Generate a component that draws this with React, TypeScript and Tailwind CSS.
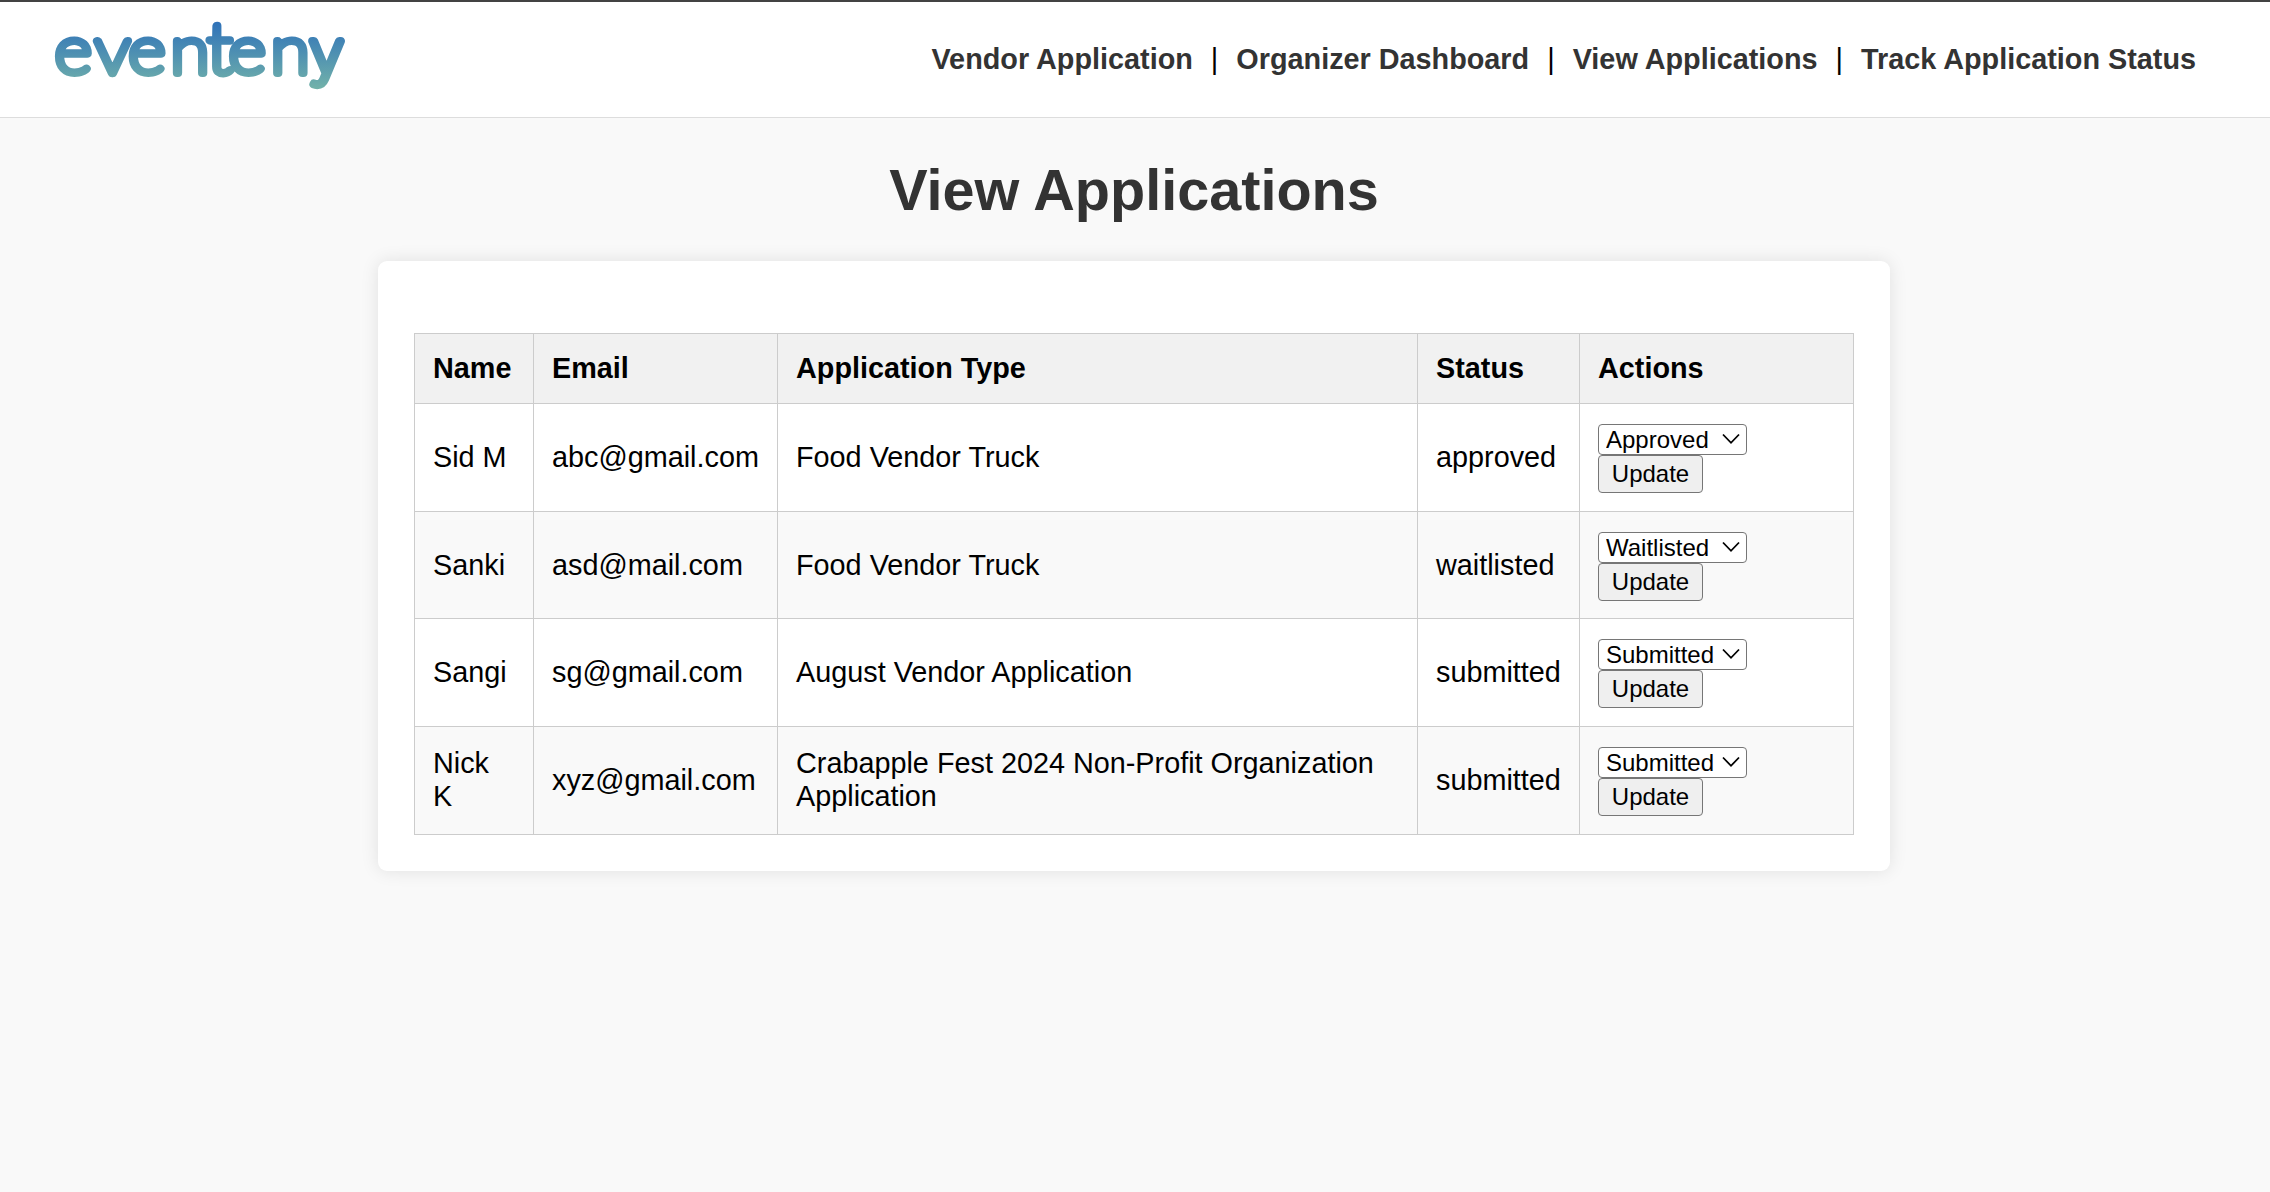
type Application = {
  name: string;
  email: string;
  type: string;
  status: string;
  action: string;
  height: string;
};

const applications: Application[] = [
  { name: 'Sid M', email: 'abc@gmail.com', type: 'Food Vendor Truck', status: 'approved', action: 'Approved', height: 'h-[108px]' },
  { name: 'Sanki', email: 'asd@mail.com', type: 'Food Vendor Truck', status: 'waitlisted', action: 'Waitlisted', height: 'h-[107px]' },
  { name: 'Sangi', email: 'sg@gmail.com', type: 'August Vendor Application', status: 'submitted', action: 'Submitted', height: 'h-[108px]' },
  { name: 'Nick K', email: 'xyz@gmail.com', type: 'Crabapple Fest 2024 Non-Profit Organization Application', status: 'submitted', action: 'Submitted', height: 'h-[108px]' },
];

const links = ['Vendor Application', 'Organizer Dashboard', 'View Applications', 'Track Application Status'];
const headings = ['Name', 'Email', 'Application Type', 'Status', 'Actions'];
const statuses = ['Submitted', 'Approved', 'Waitlisted', 'Rejected'];

function Logo() {
  return (
    <svg width="320" height="115" viewBox="45 2 320 115" aria-label="eventeny" className="block">
      <defs>
        <linearGradient id="brand" gradientUnits="userSpaceOnUse" x1="0" y1="22" x2="0" y2="91">
          <stop offset="0" stopColor="#2f72b9" />
          <stop offset="1" stopColor="#74b4a9" />
        </linearGradient>
      </defs>
      <text
        transform="scale(1.08 1)"
        x="50.6 88 119 157.8 192 211.8 250.8 286.3"
        y="73.1"
        fontSize="66"
        fill="url(#brand)"
        stroke="url(#brand)"
        strokeWidth="7.8"
        strokeLinejoin="round"
        className="font-['Lato',sans-serif] font-extralight"
      >
        even<tspan fontSize="70">t</tspan>en
        <tspan fontSize="59" className="font-['Inter',sans-serif] font-thin">y</tspan>
      </text>
    </svg>
  );
}

function StatusSelect({ value }: { value: string }) {
  return (
    <div className="relative h-[31px] w-[149px]">
      <select
        defaultValue={value}
        className="block h-full w-full appearance-none rounded-[4px] border border-[#767676] bg-white pl-[7px] text-[24px] leading-[29px] text-black"
      >
        {statuses.map((s) => (
          <option key={s}>{s}</option>
        ))}
      </select>
      <svg width="18" height="12" viewBox="0 0 18 12" className="pointer-events-none absolute top-[9px] right-[7px]">
        <path d="M1 1.5 L9 9.8 L17 1.5" fill="none" stroke="#000" strokeWidth="1.8" />
      </svg>
    </div>
  );
}

export default function App() {
  return (
    <div className="flex min-h-screen flex-col bg-[#f9f9f9] font-['Liberation_Sans',Arial,sans-serif] text-[28.8px] leading-[33px] text-black">
      <header className="flex h-[118px] items-start justify-between border-t-2 border-b border-t-[#434343] border-b-[#ddd] bg-white pr-[56px] pl-[45px]">
        <Logo />
        <nav className="flex items-center pt-[41px]">
          {links.map((label, i) => (
            <div key={label} className="flex items-center">
              {i > 0 && <span className="w-[7.5px] text-center">|</span>}
              <a href="#" className="mx-[18px] font-bold whitespace-nowrap text-[#333]">
                {label}
              </a>
            </div>
          ))}
        </nav>
      </header>

      <main className="flex flex-col items-center pr-[2px]">
        <h1 className="mt-[39px] text-[57.6px] leading-[66px] font-bold text-[#333]">View Applications</h1>
        <section className="mt-[38px] h-[610px] w-[1512px] rounded-[9px] bg-white px-[36px] pt-[72px] shadow-[0_0_18px_rgba(0,0,0,0.1)]">
          <table className="w-[1440px] table-fixed border-separate border-spacing-0 border-t border-l border-[#ccc]">
            <colgroup>
              <col className="w-[119px]" />
              <col className="w-[244px]" />
              <col className="w-[640px]" />
              <col className="w-[162px]" />
              <col className="w-[274px]" />
            </colgroup>
            <thead>
              <tr className="h-[70px] bg-[#f1f1f1] text-left">
                {headings.map((h) => (
                  <th key={h} className="border-r border-b border-[#ccc] p-0 pl-[18px] font-bold">
                    {h}
                  </th>
                ))}
              </tr>
            </thead>
            <tbody>
              {applications.map((a) => (
                <tr key={a.name} className={`${a.height} group even:bg-[#f9f9f9]`}>
                  <td className="border-r border-b border-[#ccc] p-0 pr-[18px] pl-[18px] group-last:pb-px">{a.name}</td>
                  <td className="border-r border-b border-[#ccc] p-0 pl-[18px]">{a.email}</td>
                  <td className="border-r border-b border-[#ccc] p-0 pr-[18px] pl-[18px] group-last:pb-px">{a.type}</td>
                  <td className="border-r border-b border-[#ccc] p-0 pl-[18px]">{a.status}</td>
                  <td className="border-r border-b border-[#ccc] p-0 pt-[20px] pl-[18px] align-top">
                    <StatusSelect value={a.action} />
                    <button className="block h-[38px] w-[105px] rounded-[4px] border border-[#767676] bg-[#efefef] text-[24px] leading-[28px]">
                      Update
                    </button>
                  </td>
                </tr>
              ))}
            </tbody>
          </table>
        </section>
      </main>
    </div>
  );
}
